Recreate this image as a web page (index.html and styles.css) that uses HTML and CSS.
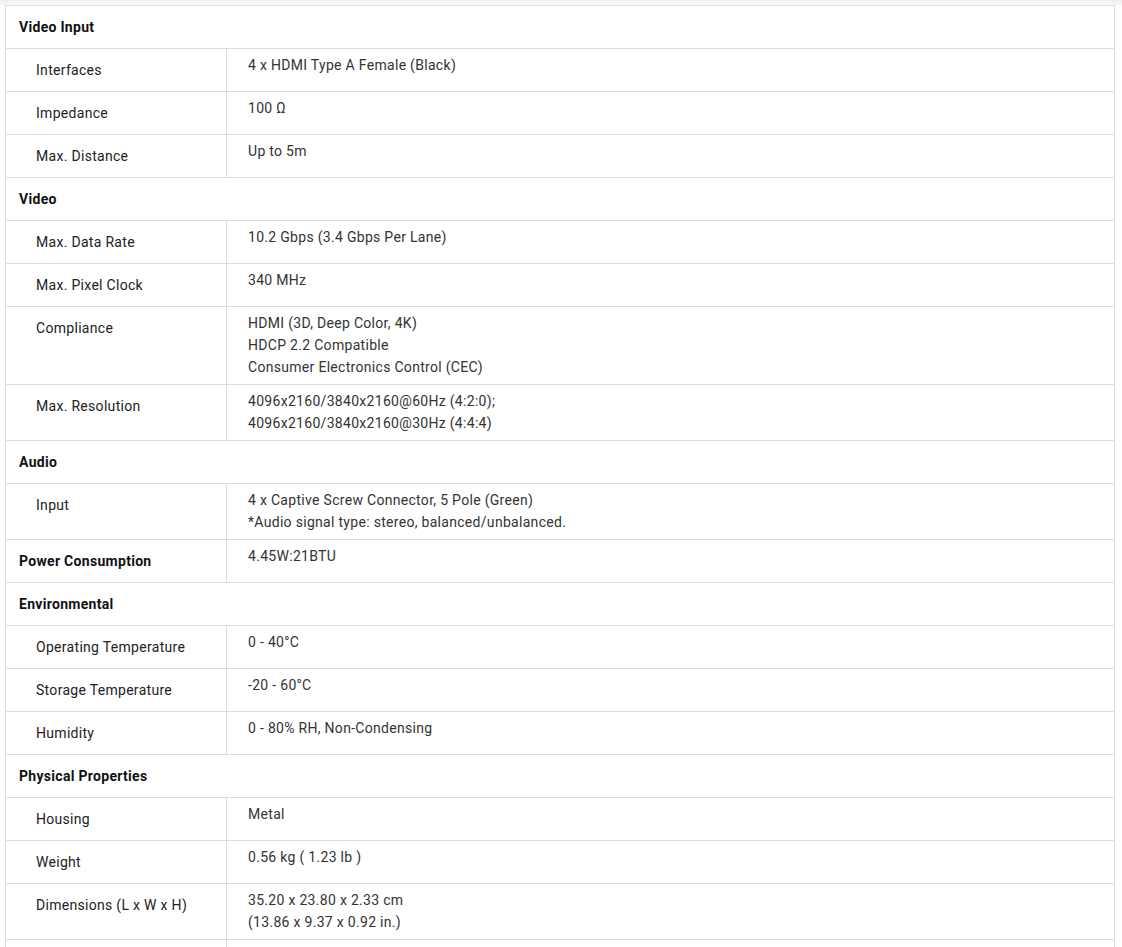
FILE: index.html
```html
<!DOCTYPE html>
<html>
<head>
<meta charset="utf-8">
<link rel="stylesheet" href="styles.css">
</head>
<body>
<div class="topshade"></div>
<div class="wrap">
<table class="specs">
<colgroup><col class="c1"><col class="c2"></colgroup>
<tr class="sec"><th colspan="2">Video Input</th></tr>
<tr><td class="lbl">Interfaces</td><td class="val">4 x HDMI Type A Female (Black)</td></tr>
<tr><td class="lbl">Impedance</td><td class="val">100 Ω</td></tr>
<tr><td class="lbl">Max. Distance</td><td class="val">Up to 5m</td></tr>
<tr class="sec"><th colspan="2">Video</th></tr>
<tr><td class="lbl">Max. Data Rate</td><td class="val">10.2 Gbps (3.4 Gbps Per Lane)</td></tr>
<tr><td class="lbl">Max. Pixel Clock</td><td class="val">340 MHz</td></tr>
<tr><td class="lbl">Compliance</td><td class="val">HDMI (3D, Deep Color, 4K)<br>HDCP 2.2 Compatible<br>Consumer Electronics Control (CEC)</td></tr>
<tr><td class="lbl">Max. Resolution</td><td class="val">4096x2160/3840x2160@60Hz (4:2:0);<br>4096x2160/3840x2160@30Hz (4:4:4)</td></tr>
<tr class="sec"><th colspan="2">Audio</th></tr>
<tr><td class="lbl">Input</td><td class="val">4 x Captive Screw Connector, 5 Pole (Green)<br>*Audio signal type: stereo, balanced/unbalanced.</td></tr>
<tr><td class="lbl bold">Power Consumption</td><td class="val">4.45W:21BTU</td></tr>
<tr class="sec"><th colspan="2">Environmental</th></tr>
<tr><td class="lbl">Operating Temperature</td><td class="val">0 - 40°C</td></tr>
<tr><td class="lbl">Storage Temperature</td><td class="val">-20 - 60°C</td></tr>
<tr><td class="lbl">Humidity</td><td class="val">0 - 80% RH, Non-Condensing</td></tr>
<tr class="sec"><th colspan="2">Physical Properties</th></tr>
<tr><td class="lbl">Housing</td><td class="val">Metal</td></tr>
<tr><td class="lbl">Weight</td><td class="val">0.56 kg ( 1.23 lb )</td></tr>
<tr><td class="lbl">Dimensions (L x W x H)</td><td class="val">35.20 x 23.80 x 2.33 cm<br>(13.86 x 9.37 x 0.92 in.)</td></tr>
<tr><td class="lbl">&nbsp;</td><td class="val">&nbsp;</td></tr>
</table>
</div>
</body>
</html>
```
FILE: styles.css
```css
html, body {
  margin: 0;
  padding: 0;
  background: #fff;
}
body {
  font-family: Roboto, "Liberation Sans", sans-serif;
  font-size: 14px;
  line-height: 22px;
  letter-spacing: 0.3px;
  color: #333;
}
.topshade {
  height: 6px;
  background: linear-gradient(#efefef, #fbfbfb);
  margin-bottom: -6px;
}
.wrap {
  padding: 5px 0 0 5px;
  position: relative;
}
.specs {
  border-collapse: collapse;
  width: 1110px;
  background: #fff;
  border: 1px solid #ddd;
}
.c1 { width: 221px; }
.specs td, .specs th {
  border: 1px solid #ddd;
  vertical-align: top;
}
.sec th {
  text-align: left;
  font-weight: 700;
  color: #111;
  padding: 10px 13px;
}
.lbl {
  padding: 10px 10px 10px 30px;
  color: #222;
}
.lbl.bold {
  font-weight: 700;
  color: #111;
  padding-left: 13px;
}
.val {
  padding: 5px 20px 6px 21px;
  color: #333;
}
```
